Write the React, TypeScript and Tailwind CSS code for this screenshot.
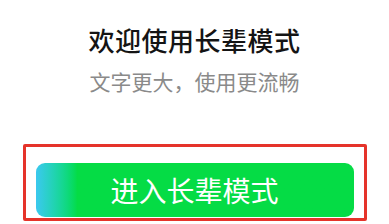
import React from 'react';

export default function App() {
  return (
    <div className="w-[389px] h-[224px] bg-white overflow-hidden flex flex-col items-center pt-[27px] font-['Noto_Sans_CJK_SC',sans-serif]">
      <h1 className="text-[26px] leading-[26px] font-medium text-[#141414] tracking-[0.5px]">欢迎使用长辈模式</h1>
      <p className="mt-[18px] text-[21px] leading-[21px] text-[#8a8a8a]">文字更大，使用更流畅</p>

      {/* highlighted entry */}
      <div className="mt-[52px] w-[344px] border-[3px] border-[#e5332a] rounded-[2px] pt-[16px] pb-[1px] px-[10px]">
        <button className="w-full h-[54px] rounded-[9px] bg-linear-to-r from-[#3bc8ef] to-[#05dc45] to-[13%] text-white text-[28px] leading-none">
          进入长辈模式
        </button>
      </div>
    </div>
  );
}
